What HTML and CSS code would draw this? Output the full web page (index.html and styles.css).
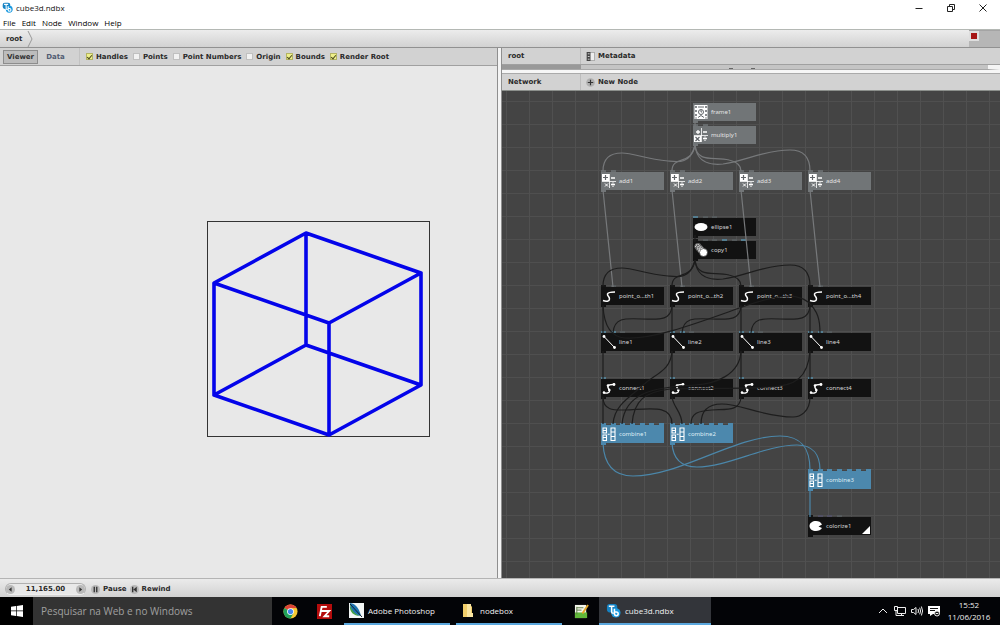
FILE: index.html
```html
<!DOCTYPE html>
<html lang="en">
<head>
<meta charset="utf-8">
<title>cube3d.ndbx</title>
<link rel="stylesheet" href="styles.css">
</head>
<body>
<svg class="defs" aria-hidden="true">
  <defs>
    <symbol id="logo" viewBox="0 0 16 16">
      <rect x="1" y="1" width="11" height="9" rx="3" fill="#1583c4"/>
      <circle cx="10.500" cy="10.500" r="5" fill="#1b9ae0"/>
      <path d="M3 3.500h6M6 3.500v6q0 1.500 2 1.500M9 6v5.500a2 2 0 1 0 2-2H9" fill="none" stroke="#fff" stroke-width="1.600"/>
    </symbol>
    <symbol id="i-math" viewBox="0 0 14 14">
      <path d="M7.500 0v14M0 7.500h14" stroke="#fff" stroke-width=".8"/>
      <path d="M4 2v4M2 4h4M9 4h4M9 10.500h4" stroke="#fff" stroke-width="1.300"/>
      <circle cx="11" cy="8.900" r=".7" fill="#fff"/><circle cx="11" cy="12.300" r=".7" fill="#fff"/>
    </symbol>
    <symbol id="i-multiply" viewBox="0 0 14 14">
      <use href="#i-math"/><rect y="8" width="7" height="6" fill="#fff"/>
      <path d="M1.500 9l4 4M5.500 9l-4 4" stroke="#62666a" stroke-width="1.200"/>
    </symbol>
    <symbol id="i-add" viewBox="0 0 14 14">
      <use href="#i-math"/><rect width="7" height="7" fill="#fff"/>
      <path d="M3.500 1v5M1 3.500h5" stroke="#62666a" stroke-width="1.200"/>
      <path d="M3 9.500l3 3M6 9.500l-3 3" stroke="#fff"/>
    </symbol>
    <symbol id="i-frame" viewBox="0 0 14 14">
      <rect x=".5" width="13" height="14" fill="#fff"/>
      <path d="M2 1v2M2 5v2M2 9v2M2 12.500v1M12 1v2M12 5v2M12 9v2M12 12.500v1" stroke="#62666a" stroke-width="1.500"/>
      <path d="M4 2h6M4 12.500l3-2 3 2" stroke="#62666a" fill="none"/>
      <circle cx="7" cy="7" r="2.500" fill="none" stroke="#62666a"/><path d="M7 5v2h1" stroke="#62666a" fill="none"/>
    </symbol>
    <symbol id="i-ellipse" viewBox="0 0 14 14"><ellipse cx="7" cy="7" rx="6.500" ry="4" fill="#fff"/></symbol>
    <symbol id="i-copy" viewBox="0 0 14 14">
      <g fill="#fff" stroke="#333" stroke-width=".7"><circle cx="4" cy="3.500" r="3.300"/><circle cx="5.500" cy="5.200" r="3.300"/><circle cx="7" cy="7" r="3.300"/><circle cx="9.500" cy="9.500" r="4"/></g>
      <path d="M1 3l3-2M1 5l5-4M2 6l5-4M3 8l5-4" stroke="#444" stroke-width=".7"/>
    </symbol>
    <symbol id="i-point" viewBox="0 0 14 14"><path d="M1 11.500c3 1.200 6.500 1 6.500-1.500S5 7 5.500 5s4-2 7.500-2" fill="none" stroke="#fff" stroke-width="1.500"/></symbol>
    <symbol id="i-line" viewBox="0 0 14 14"><path d="M2 1.500l10.500 11" stroke="#fff"/><circle cx="2" cy="1.500" r="1.400" fill="#fff"/><circle cx="12.500" cy="12.500" r="1.400" fill="#fff"/></symbol>
    <symbol id="i-connect" viewBox="0 0 14 14">
      <path d="M1 11.500c3 1 6.500 1 6.500-1.500S5 7 6 5s4-1.500 7-1.500" fill="none" stroke="#fff" stroke-width="1.400"/>
      <g fill="#fff"><circle cx="2" cy="11.500" r="1.200"/><circle cx="7.300" cy="9" r="1.300"/><circle cx="6" cy="4.500" r="1.300"/><circle cx="12" cy="3.500" r="1.400"/></g>
    </symbol>
    <symbol id="i-combine" viewBox="0 0 14 14">
      <path d="M1 1h3.500v5H1zM1 8h3.500v5.500H1zM9 1h4v12.500H9zM9 5h4M9 9.500h4M1 3.500h3.500M1 10.500h3.500M5.700 7.200h2" fill="none" stroke="#fff" stroke-width="1.100"/>
    </symbol>
    <symbol id="i-colorize" viewBox="0 0 14 14"><path d="M13 5.500C12 3 9.500 2 7 2 3.500 2 .5 4 .5 7s3 5 6.500 5c2.500 0 5-1 6-3L9.500 7.500z" fill="#fff"/></symbol>
    <g id="fan">
      <path d="M695 145C690 165 677 162 668 161C645 159 634 153 622 153C608 153 603 160 603 171"/>
      <path d="M695 145C692 166 672 155 672 171"/>
      <path d="M695 145C697 164 715 156 729 160C738 162 741 166 741 171"/>
      <path d="M695 145C697 165 713 165 723 164C745 161 765 150 790 150C806 150 810 160 810 171"/>
    </g>
  </defs>
</svg>
<div class="window">
  <header class="titlebar">
    <svg class="app-icon"><use href="#logo"/></svg>
    <span class="title">cube3d.ndbx</span>
    <div class="win-buttons">
      <button aria-label="Minimize"><svg viewBox="0 0 10 10"><path d="M1.500 5.500h7"/></svg></button>
      <button aria-label="Restore"><svg viewBox="0 0 10 10"><path d="M1.500 3.500h5v5h-5zM3.500 3.500v-2h5v5h-2"/></svg></button>
      <button aria-label="Close"><svg viewBox="0 0 10 10"><path d="M1.500 1.500l7 7M8.500 1.500l-7 7"/></svg></button>
    </div>
  </header>
  <nav class="menu"><button>File</button><button>Edit</button><button>Node</button><button>Window</button><button>Help</button></nav>
  <div class="crumbs">
    <button class="crumb">root</button>
    <svg class="crumb-arrow" viewBox="0 0 6 16"><path d="M1 0l4 8-4 8"/></svg>
    <div class="progress"><button aria-label="Stop"></button></div>
  </div>
  <main class="panes">
    <section class="viewer">
      <div class="bar viewer-bar">
        <button class="tab active">Viewer</button><button class="tab">Data</button>
        <div class="checks">
          <label><input type="checkbox" checked>Handles</label>
          <label><input type="checkbox">Points</label>
          <label><input type="checkbox">Point Numbers</label>
          <label><input type="checkbox">Origin</label>
          <label><input type="checkbox" checked>Bounds</label>
          <label><input type="checkbox" checked>Render Root</label>
        </div>
      </div>
      <div class="stage">
        <svg class="cube" viewBox="207 221 224 217">
          <rect x="207.500" y="221.500" width="222" height="215" fill="none" stroke="#333"/>
          <path d="M306 233L421 273L329 323L214 283zM306 345L421 385L329 435L214 395zM306 233V345M421 273V385M329 323V435M214 283V395" fill="none" stroke="#0404ea" stroke-width="3.600" stroke-linejoin="round"/>
        </svg>
      </div>
    </section>
    <div class="splitter"></div>
    <section class="side">
      <div class="bar">
        <span class="pane-name">root</span>
        <button class="tool"><svg viewBox="0 0 10 10"><rect x=".5" y=".5" width="9" height="9" fill="#eee" stroke="#aaa"/><path d="M1 0h4v10H1z" fill="#444"/><path d="M2 2h2M2 5h2M2 8h2" stroke="#ddd"/></svg>Metadata</button>
      </div>
      <div class="params"><span></span><i></i><i></i></div>
      <div class="hsplit"></div>
      <div class="bar network-bar">
        <span class="pane-name">Network</span>
        <button class="tool"><svg viewBox="0 0 10 10"><circle cx="5" cy="5" r="4.800" fill="#b0b0b0"/><path d="M5 2v6M2 5h6" stroke="#333" stroke-width="1.300"/></svg>New Node</button>
      </div>
      <div class="network">
        <div class="node gray mid r1"><svg><use href="#i-frame"/></svg>frame1</div>
        <div class="node gray mid r2"><b><i></i><i></i></b><svg><use href="#i-multiply"/></svg>multiply1</div>
        <div class="node gray c1 r3"><b><i></i><i></i></b><svg><use href="#i-add"/></svg>add1</div>
        <div class="node gray c2 r3"><b><i></i><i></i></b><svg><use href="#i-add"/></svg>add2</div>
        <div class="node gray c3 r3"><b><i></i><i></i></b><svg><use href="#i-add"/></svg>add3</div>
        <div class="node gray c4 r3"><b><i></i><i></i></b><svg><use href="#i-add"/></svg>add4</div>
        <div class="node mid r4"><b><i class="pt"></i><i></i><i></i></b><svg><use href="#i-ellipse"/></svg>ellipse1</div>
        <div class="node mid r5"><b><i class="own"></i><i></i><i></i><i class="pt"></i><i></i><i class="pt"></i></b><svg><use href="#i-copy"/></svg>copy1</div>
        <div class="node c1 r6"><b><i class="own"></i><i></i></b><svg><use href="#i-point"/></svg>point_o...th1</div>
        <div class="node c2 r6"><b><i class="own"></i><i></i></b><svg><use href="#i-point"/></svg>point_o...th2</div>
        <div class="node c3 r6"><b><i class="own"></i><i></i></b><svg><use href="#i-point"/></svg>point_o...th3</div>
        <div class="node c4 r6"><b><i class="own"></i><i></i></b><svg><use href="#i-point"/></svg>point_o...th4</div>
        <div class="node c1 r7"><b><i class="pt"></i><i class="pt"></i><i></i></b><svg><use href="#i-line"/></svg>line1</div>
        <div class="node c2 r7"><b><i class="pt"></i><i class="pt"></i><i></i></b><svg><use href="#i-line"/></svg>line2</div>
        <div class="node c3 r7"><b><i class="pt"></i><i class="pt"></i><i></i></b><svg><use href="#i-line"/></svg>line3</div>
        <div class="node c4 r7"><b><i class="pt"></i><i class="pt"></i><i></i></b><svg><use href="#i-line"/></svg>line4</div>
        <div class="node c1 r8"><b><i class="pt"></i></b><svg><use href="#i-connect"/></svg>connect1</div>
        <div class="node c2 r8"><b><i class="pt"></i></b><svg><use href="#i-connect"/></svg>connect2</div>
        <div class="node c3 r8"><b><i class="pt"></i></b><svg><use href="#i-connect"/></svg>connect3</div>
        <div class="node c4 r8"><b><i class="pt"></i></b><svg><use href="#i-connect"/></svg>connect4</div>
        <div class="node blue c1 r9"><b><i></i><i></i><i></i><i></i><i></i><i></i><i></i></b><svg><use href="#i-combine"/></svg>combine1</div>
        <div class="node blue c2 r9"><b><i></i><i></i><i></i><i></i><i></i><i></i><i></i></b><svg><use href="#i-combine"/></svg>combine2</div>
        <div class="node blue c4 r10"><b><i></i><i></i><i></i><i></i><i></i><i></i><i></i></b><svg><use href="#i-combine"/></svg>combine3</div>
        <div class="node rendered c4 r11"><b><i class="own"></i><i class="color"></i><i class="color"></i><i></i></b><svg><use href="#i-colorize"/></svg>colorize1</div>
        <svg class="wires" aria-hidden="true">
          <g transform="translate(-502 -91)">
            <g stroke="#77797b">
              <path d="M695 121V126"/>
              <use href="#fan"/>
              <path d="M603 190L613 287M672 190L682 287M741 190L751 287M810 190L820 287"/>
            </g>
            <g stroke="#1d1d1d">
              <path d="M695 235V242"/>
              <use href="#fan" y="115"/>
              <path d="M603 305V333M672 305V333M741 305V333M810 305V333"/>
              <path d="M672 306C671 322 656 319 642 319C624 318 614 318 613 333M741 306C740 322 725 319 711 319C693 318 683 318 682 333M810 306C809 322 794 319 780 319C762 318 752 318 751 333"/>
              <path d="M603 306C604 325 610 337 625 338C655 340 705 320 748 305C775 296 795 292 808 302C818 311 820 320 820 333"/>
              <path d="M603 351V379M672 351V379M741 351V379M810 351V379"/>
              <path d="M672 351C671 372 653 374 640 388C625 400 614 408 613 424"/>
              <path d="M741 351C740 375 715 384 695 385C655 387 625 392 622 424"/>
              <path d="M810 351C808 378 795 386 770 387C740 389 700 388 670 389C645 392 634 400 632 424"/>
              <path d="M603 397V424M672 397C673 407 682 412 682 424"/>
              <path d="M603 397C603 411 615 410 625 410C650 409 672 404 672 424"/>
              <path d="M741 397C740 412 725 409 712 410C698 411 691 413 691 424"/>
              <path d="M810 397C810 412 800 417 793 417C765 417 740 404 722 404C708 404 701 410 701 424"/>
            </g>
            <g stroke="#4b87aa">
              <path d="M603 443C604 466 615 476 633 476C680 476 735 436 780 436C803 436 810 450 810 470"/>
              <path d="M672 443C673 460 682 467 697 467C728 467 765 445 797 445C813 445 820 455 820 470"/>
              <path d="M810 489V517"/>
            </g>
          </g>
        </svg>
      </div>
    </section>
  </main>
  <footer class="transport">
    <div class="frame-box">
      <button aria-label="Previous frame"><svg viewBox="0 0 8 8"><path d="M5 2v4L2.500 4z"/></svg></button>
      <input type="text" value="11,165.00" aria-label="Frame">
      <button aria-label="Next frame"><svg viewBox="0 0 8 8"><path d="M3 2v4L5.500 4z"/></svg></button>
    </div>
    <button class="play"><svg viewBox="0 0 8 8"><path d="M2.300 1.500h1.200v5H2.300zM4.500 1.500h1.200v5H4.500z"/></svg>Pause</button>
    <button class="play"><svg viewBox="0 0 8 8"><path d="M1.800 1.500H3v5H1.800zM6 1.500v5L3 4z"/></svg>Rewind</button>
  </footer>
  <div class="taskbar">
    <button class="start" aria-label="Start"><svg viewBox="0 0 12 12"><path d="M0 1.700L5 1v4.600H0zM5.700.9L12 0v5.600H5.700zM0 6.300h5V11l-5-.7zM5.700 6.300H12V12l-6.300-.9z" fill="#fff"/></svg></button>
    <input class="search" type="text" placeholder="Pesquisar na Web e no Windows" aria-label="Search">
    <button class="task pin" aria-label="Chrome"><svg viewBox="0 0 16 16"><circle cx="8" cy="8" r="7.500" fill="#f6c934"/><path d="M8 8L1.500 4.250A7.500 7.500 0 0 1 14.500 4.250L8 4.500z" fill="#dd4437"/><path d="M8 8L1.500 4.250A7.500 7.500 0 0 0 8 15.500L11 10z" fill="#21a25b"/><circle cx="8" cy="8" r="3.600" fill="#fff"/><circle cx="8" cy="8" r="2.800" fill="#4787ee"/></svg></button>
    <button class="task pin" aria-label="FileZilla"><svg viewBox="0 0 16 16"><rect width="16" height="16" fill="#b40c0c"/><path d="M3 13L5 3h5.500M4 7.500h4M8 7.500h5L8 13h5" fill="none" stroke="#fff" stroke-width="2"/></svg></button>
    <button class="task open first"><svg viewBox="0 0 15 15"><rect width="15" height="15" fill="#f3f6f6"/><path d="M1 0c6 1 9 5 11 13C5 12 1 7 1 0z" fill="#1d72ae"/><path d="M1 2c2 6 5 9 10 11C5 13 0 9 1 2z" fill="#43a047"/><path d="M1 1l12 13" stroke="#123"/></svg>Adobe Photoshop</button>
    <button class="task open"><svg class="folder" viewBox="0 0 12 15"><path d="M1 1h7l2 3v10H1z" fill="#f1ce6a"/><path d="M5 1h4v9h2v4H5z" fill="#fbe6a1"/></svg>nodebox</button>
    <button class="task pad" aria-label="Notepad++"><svg viewBox="0 0 16 16"><path d="M1 1h12v14H1z" fill="#f5f7ec"/><path d="M1 9h13v6H1z" fill="#61b83a"/><path d="M3 4h7M3 6.500h5M3 3v8" stroke="#5b7844"/><path d="M15 1L9 10" stroke="#e2a62a" stroke-width="2"/></svg></button>
    <button class="task open current"><svg><use href="#logo"/></svg>cube3d.ndbx</button>
    <div class="tray">
      <svg viewBox="0 0 12 12"><path d="M2 8l4-4 4 4"/></svg>
      <svg viewBox="0 0 12 12"><path d="M3.500 2.500h8v6h-8zM7.500 8.500v2M5 10.500h5M.5 1.500h3v4H.5zM2 5.500v5h3"/></svg>
      <svg viewBox="0 0 12 12"><path d="M.5 4.500h2l2.500-2v7l-2.500-2h-2zM7 4q1 2 0 4M8.700 2.700q1.800 3.300 0 6.600M10.400 1.500q2.400 4.500 0 9"/></svg>
      <svg viewBox="0 0 12 12"><path d="M0 1h12v8H5l-3 2V9H0z" fill="#fff" stroke="none"/><path d="M2 3.500h8M2 5.500h5" stroke="#111"/><circle cx="9" cy="8.500" r="2.500" fill="#111"/><path d="M7.700 8.500h2.600"/></svg>
    </div>
    <div class="clock"><span>15:52</span><span>11/06/2016</span></div>
  </div>
</div>
</body>
</html>
```
FILE: styles.css
```css
* { box-sizing: border-box; }
body { margin: 0; font-family: "DejaVu Sans", sans-serif; font-size: 7px; font-weight: bold; color: #2a2a2a; }
button, input { margin: 0; padding: 0; border: 0; background: none; font: inherit; color: inherit; }
svg { display: block; flex: none; }
.defs { position: absolute; width: 0; height: 0; }
.window { display: flex; flex-direction: column; height: 100vh; overflow: hidden; background: #fff; }

.titlebar { display: flex; align-items: center; height: 15px; flex: none; padding-left: 2px; font: 8px "Open Sans", sans-serif; color: #111; }
.app-icon { width: 11px; height: 11px; margin-right: 3px; }
.win-buttons { display: flex; margin: 0 1px 0 auto; }
.win-buttons button { width: 32px; display: grid; place-items: center; }
.win-buttons svg { width: 10px; height: 10px; fill: none; stroke: #222; }
.menu { display: flex; align-items: center; gap: 6px; height: 14px; flex: none; padding-left: 3px; font: 8px "Open Sans", sans-serif; color: #000; }

.crumbs { display: flex; align-items: center; height: 19px; flex: none; border-top: 1px solid #b4b8b4; border-bottom: 1px solid #919191; background: linear-gradient(#ececec, #d2d2d2); padding-left: 6px; }
.crumb-arrow { width: 6px; height: 16px; margin-left: 5px; fill: none; stroke: #999; }
.progress { margin-left: auto; width: 31px; align-self: stretch; background: #b6b6b6; border-top: 1px solid #a4a4a4; }
.progress button { display: block; width: 10px; height: 10px; border: 2px solid #dedede; background: #a51414; }

.panes { display: flex; flex: 1; min-height: 0; }
.bar { display: flex; align-items: center; height: 17px; flex: none; background: #d2d2d2; border-bottom: 1px solid #a0a0a0; }
.viewer { display: flex; flex-direction: column; flex: none; width: calc(50% - 2px); border-right: 1px solid #8f8f8f; background: #e8e8e8; }
.viewer-bar { height: 18px; padding-left: 3px; }
.tab { height: 14px; width: 35px; color: #525d73; }
.tab.active { background: #bcbcbc; border: 1px solid #8d8d8d; color: #333; }
.checks { display: flex; align-items: center; gap: 5px; align-self: stretch; margin-left: 6px; padding-left: 6px; border-left: 1px solid #c2c2c2; white-space: nowrap; }
.checks label { display: flex; align-items: center; gap: 3px; }
.checks input { appearance: none; width: 7px; height: 7px; background: #f2f2f2; border: 1px solid #c0c0c0; display: grid; place-items: center; }
.checks input:checked { background: #eef08a; border-color: #b4b464; }
.checks input:checked::after { content: ""; width: 2px; height: 4px; border: solid #4a4a20; border-width: 0 1px 1px 0; transform: rotate(40deg); }
.stage { position: relative; flex: 1; overflow: hidden; }
.cube { position: absolute; left: 207px; top: 155px; width: 224px; height: 217px; }
.splitter { width: 4px; flex: none; background: #f4f4f4; border-right: 1px solid #8f8f8f; }
.side { display: flex; flex-direction: column; flex: 1; min-width: 0; }
.pane-name { width: 79px; align-self: stretch; display: flex; align-items: center; padding-left: 6px; border-right: 1px solid #bdbdbd; }
.tool { display: flex; align-items: center; gap: 3px; padding-left: 5px; }
.tool svg { width: 9px; height: 9px; }
.params { display: flex; height: 5px; flex: none; background: #c4c4c4; border-bottom: 1px solid #a8a8a8; border-right: 12px solid #f5f5f5; }
.params span { width: 79px; margin-right: 148px; background: #999; }
.params i { width: 4px; height: 1px; margin: 3px 18px 0 0; background: #666; }
.hsplit { height: 4px; flex: none; background: #f6f6f6; border-bottom: 1px solid #aaa; }
.network-bar { border-bottom-color: #8b8f8b; }

.network { position: relative; flex: 1; overflow: hidden; background: repeating-linear-gradient(90deg, transparent 0 4px, #505050 4px 5px, transparent 5px 23px), repeating-linear-gradient(transparent 0 10px, #4f4f4f 10px 11px, transparent 11px 23px), #444; }
.node { position: absolute; display: flex; align-items: center; gap: 3px; width: 63px; height: 18px; padding-left: 1px; background: #121212; color: #d6d6d6; font: 6px "Noto Sans", sans-serif; white-space: nowrap; }
.node svg { width: 14px; height: 14px; }
.node::before { content: ""; position: absolute; left: 0; top: 100%; width: 5px; height: 2px; background: inherit; }
.node b { position: absolute; left: 0; right: 0; top: -2px; height: 2px; display: grid; grid-template-columns: repeat(7, 5px); justify-content: space-between; background: transparent; }
.node i { background: #555a5c; }
.node .pt { background: #547d90; }
.node .own { background: #161616; }
.node .color { background: #515063; }
.gray { background: #717577; color: #e4e4e4; }
.gray i { background: #666a6c; }
.blue { background: #4c88ad; color: #deedf5; }
.blue i { background: #4c88ad; }
.rendered::after { content: ""; position: absolute; right: 1px; bottom: 1px; border: 4px solid #fff; border-left-color: transparent; border-top-color: transparent; }
.wires { position: absolute; inset: 0; fill: none; stroke-width: 1.2; pointer-events: none; }
.network .wires { width: 100%; height: 100%; }
.c1 { left: 99px; } .c2 { left: 168px; } .mid { left: 191px; } .c3 { left: 237px; } .c4 { left: 306px; }
.r1 { top: 12px; } .r2 { top: 35px; } .r3 { top: 81px; } .r4 { top: 127px; } .r5 { top: 150px; } .r6 { top: 196px; }
.r7 { top: 242px; } .r8 { top: 288px; } .r9 { top: 334px; } .r10 { top: 380px; } .r11 { top: 426px; }

.transport { display: flex; align-items: center; gap: 3px; height: 19px; flex: none; padding: 2px 0 0 5px; background: linear-gradient(#ebebeb, #d1d1d1); border-top: 1px solid #b4b4b4; }
.frame-box { display: flex; align-items: center; width: 81px; height: 12px; border: 1px solid #b0b0b0; border-bottom-color: #eee; border-radius: 6px; background: #e8e8e8; margin-right: 2px; }
.frame-box input { flex: 1; min-width: 0; text-align: center; }
.frame-box button, .play svg { width: 9px; height: 9px; border-radius: 5px; background: #b9b9b9; fill: #333; }
.frame-box button svg { width: 9px; height: 9px; fill: #333; }
.play { display: flex; align-items: center; gap: 3px; }

.taskbar { display: flex; align-items: stretch; height: 28px; flex: none; background: #030407; color: #f0f0f0; font: 8px "Open Sans", sans-serif; }
.start { width: 33px; display: grid; place-items: center; background: #000; }
.start svg { width: 12px; height: 12px; }
.search { width: 239px; padding-left: 8px; background: #333; font-size: 10px; }
.search::placeholder { color: #a0a0a0; opacity: 1; }
.task { display: flex; align-items: center; gap: 4px; padding-left: 5px; white-space: nowrap; }
.task svg { width: 15px; height: 15px; }
.pin { width: 34px; padding-left: 11px; }
.open { width: 106px; border-bottom: 2px solid #5aa7dd; margin-right: 6px; }
.first { margin-left: 4px; }
.task .folder { width: 12px; margin: 0 2px 0 1px; }
.pad { width: 31px; padding-left: 6px; }
.current { width: 112px; padding-left: 7px; background: #33353a; }
.tray { display: flex; align-items: center; gap: 5px; margin-left: auto; }
.tray svg { width: 12px; height: 12px; fill: none; stroke: #eee; }
.clock { display: flex; flex-direction: column; justify-content: center; align-items: center; line-height: 12px; width: 48px; margin: 0 7px 0 5px; }
```
